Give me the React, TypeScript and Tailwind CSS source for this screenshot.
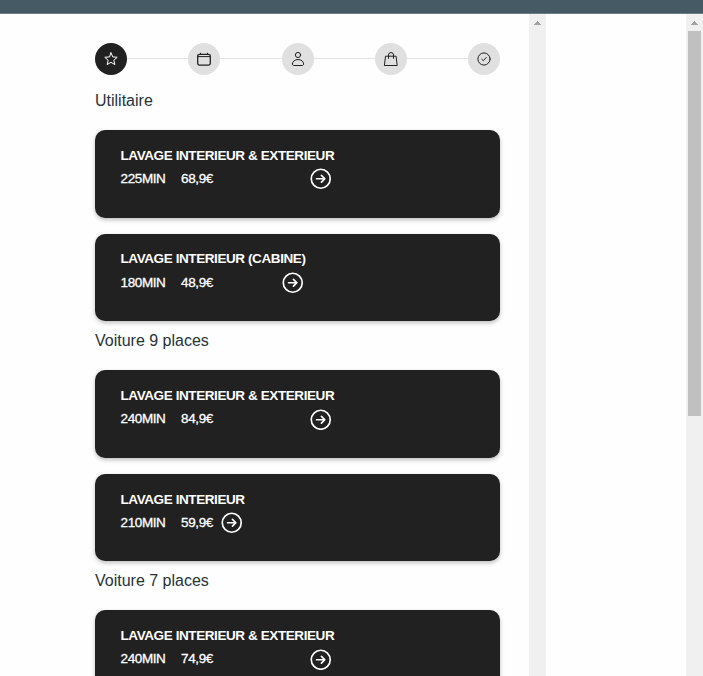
import type { ReactNode } from "react";

type Service = { title: string; duration: string; price: string; width: string };

const sections: { name: string; services: Service[] }[] = [
  {
    name: "Utilitaire",
    services: [
      { title: "LAVAGE INTERIEUR & EXTERIEUR", duration: "225MIN", price: "68,9€", width: "w-[214px]" },
      { title: "LAVAGE INTERIEUR (CABINE)", duration: "180MIN", price: "48,9€", width: "w-[186px]" },
    ],
  },
  {
    name: "Voiture 9 places",
    services: [
      { title: "LAVAGE INTERIEUR & EXTERIEUR", duration: "240MIN", price: "84,9€", width: "w-[214px]" },
      { title: "LAVAGE INTERIEUR", duration: "210MIN", price: "59,9€", width: "w-[125px]" },
    ],
  },
  {
    name: "Voiture 7 places",
    services: [{ title: "LAVAGE INTERIEUR & EXTERIEUR", duration: "240MIN", price: "74,9€", width: "w-[214px]" }],
  },
];

const icons: ReactNode[] = [
  <path key="star" d="M8 1.8l1.75 4.1 4.45.4-3.35 2.95 1 4.35L8 11.3l-3.85 2.3 1-4.35L1.8 6.3l4.45-.4z" />,
  <g key="calendar">
    <rect x="1.7" y="3.3" width="12.6" height="10.8" rx="1.8" strokeWidth="1.3" />
    <path d="M2 5.6h12M4.5 2.2v.8M11.5 2.2v.8" />
  </g>,
  <g key="person">
    <circle cx="8" cy="4" r="2.6" />
    <path d="M2.4 12.9c0-2.4 2.4-4.4 5.6-4.4s5.6 2 5.6 4.4c0 .9-.6 1.6-1.5 1.6H3.9c-.9 0-1.5-.7-1.5-1.6z" />
  </g>,
  <g key="bag">
    <path d="M2.9 5.2h10.2l1.1 9.3H1.8zM5.5 7.4V4a2.5 2.5 0 0 1 5 0v3.4" />
  </g>,
  <g key="check">
    <circle cx="8" cy="8" r="6.1" />
    <path d="M5.8 8.2l1.5 1.5 2.9-3.2" />
  </g>,
];

function Steps() {
  return (
    <div className="flex h-8 items-center">
      {icons.map((icon, i) => (
        <div key={i} className={i === 0 ? "flex items-center" : "flex flex-1 items-center"}>
          {i > 0 && <div className="mb-px h-px flex-1 bg-[#e3e3e3]" />}
          <div
            className={
              i === 0
                ? "flex size-8 items-center justify-center rounded-full bg-[#212121] text-white"
                : "flex size-8 items-center justify-center rounded-full bg-[#e0e0e0] text-[#212121]"
            }
          >
            <svg viewBox="0 0 16 16" className="size-4" fill="none" stroke="currentColor" strokeWidth="1" strokeLinejoin="round" strokeLinecap="round">
              {icon}
            </svg>
          </div>
        </div>
      ))}
    </div>
  );
}

function Card({ service }: { service: Service }) {
  return (
    <div className="h-[87.6px] shrink-0 rounded-[10px] bg-[#212121] pl-[25.5px] pt-[16.8px] text-white shadow-[0_2px_4px_rgba(0,0,0,0.25)]">
      <div className={`${service.width} whitespace-nowrap`}>
        <div className="h-[18px] text-[13.5px] font-bold leading-[18px] tracking-[-0.41px]">{service.title}</div>
        <div className="flex pt-[3px] pr-[3px] text-[13.5px] leading-[20px] tracking-[-0.38px]">
          <span className="w-[60.5px] pt-[1.3px] [-webkit-text-stroke:0.3px_white]">{service.duration}</span>
          <span className="pt-[1.3px] [-webkit-text-stroke:0.3px_white]">{service.price}</span>
          <svg viewBox="0 0 22 22" className="ml-auto mt-[0.7px] size-[21.5px] shrink-0" fill="none" stroke="currentColor" strokeWidth="1.7" strokeLinecap="round" strokeLinejoin="round">
            <circle cx="11" cy="11" r="9.7" />
            <path d="M6.7 11h8.3M11.7 7.5l3.5 3.5-3.5 3.5" />
          </svg>
        </div>
      </div>
    </div>
  );
}

function ScrollArrow() {
  return (
    <svg viewBox="0 0 7 4" className="mt-[7px] h-1 w-[7px]" fill="#a3a3a3" shapeRendering="crispEdges">
      <path d="M3 0h1v1h1v1h1v1h1v1H0V3h1V2h1V1h1z" />
    </svg>
  );
}

export default function App() {
  return (
    <div className="flex h-[676px] w-[703px] flex-col overflow-hidden bg-[#fefefe] font-['Liberation_Sans',Arial,sans-serif]">
      <header className="h-[14px] shrink-0 border-b border-[#6c7d86] bg-[#455a64]" />
      <div className="flex min-h-0 flex-1">
        <main className="h-full w-[529px] overflow-hidden pl-[95px] pr-[29px] pt-[29px]">
          <Steps />
          <div className="pt-[13px]">
            {sections.map((section) => (
              <section key={section.name} className="h-[240.2px]">
                <h2 className="h-[42px] pt-px text-[16px] leading-6 text-[#263238]">{section.name}</h2>
                <div className="flex flex-col gap-4">
                  {section.services.map((service) => (
                    <Card key={service.title} service={service} />
                  ))}
                </div>
              </section>
            ))}
          </div>
        </main>
        <div className="flex w-[17px] flex-col items-center bg-[#f0f0f0]">
          <ScrollArrow />
        </div>
        <div className="flex-1" />
        <div className="flex w-[17px] flex-col items-center bg-[#f0f0f0]">
          <ScrollArrow />
          <div className="mt-[6px] h-[385px] w-[13px] bg-[#c0c0c0]" />
        </div>
      </div>
    </div>
  );
}
